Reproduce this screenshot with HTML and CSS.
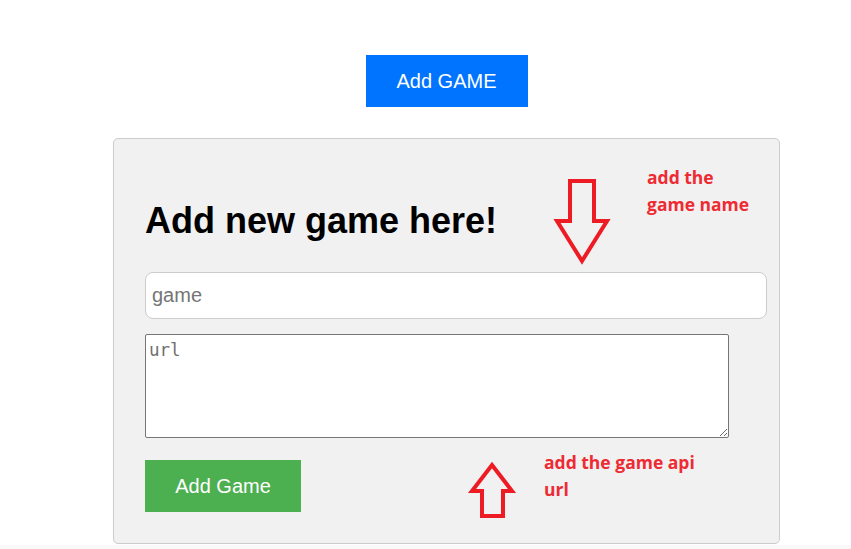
FILE: index.html
```html
<!DOCTYPE html>
<html>
<head>
<meta charset="utf-8">
<link rel="stylesheet" href="styles.css">
</head>
<body>
<div class="page">
  <div class="top">
    <button class="btn btn-blue">Add GAME</button>
  </div>
  <div class="card">
    <h1 class="title">Add new game here!</h1>
    <input class="field" type="text" placeholder="game">
    <textarea class="area" placeholder="url"></textarea>
    <button class="btn btn-green">Add Game</button>
  </div>
</div>
<div class="footer"></div>
<div class="notes">
  <svg class="arrows" width="851" height="549" viewBox="0 0 851 549">
    <path d="M570 181 H594 V221 H607 L582 261 L557 221 H570 Z" fill="none" stroke="#ed1c24" stroke-width="4" stroke-linejoin="miter"/>
    <path d="M492 465 L512 491 H503 V516 H482 V491 H472 Z" fill="none" stroke="#ed1c24" stroke-width="4" stroke-linejoin="miter"/>
  </svg>
  <div class="note note-name">add the<br>game name</div>
  <div class="note note-url">add the game api<br>url</div>
</div>
</body>
</html>
```
FILE: styles.css
```css
html, body {
  margin: 0;
  padding: 0;
  background: #ffffff;
}
body {
  font-family: "Liberation Sans", Arial, sans-serif;
  position: relative;
  width: 851px;
  height: 549px;
  overflow: hidden;
}
.page {
  width: 667px;
  margin-left: 113px;
  padding-top: 55px;
}
.top {
  display: flex;
  justify-content: center;
}
.btn {
  border: none;
  color: #ffffff;
  font-family: "Liberation Sans", Arial, sans-serif;
  font-size: 20px;
  height: 52px;
  padding: 0;
  cursor: pointer;
}
.btn-blue {
  background: #0074ff;
  width: 162px;
}
.btn-green {
  background: #4caf50;
  width: 156px;
  display: block;
}
.card {
  margin-top: 31px;
  background: #f1f1f1;
  border: 1px solid #cccccc;
  border-radius: 5px;
  padding: 32px 0 30px 31px;
  height: 342px;
}
.title {
  font-size: 36px;
  font-weight: bold;
  margin: 29px 0 31px 0;
  line-height: 41px;
  color: #000;
}
.field {
  display: block;
  box-sizing: border-box;
  width: 622px;
  height: 47px;
  border: 1px solid #cccccc;
  border-radius: 8px;
  padding: 0 6px;
  font-family: "Liberation Sans", Arial, sans-serif;
  font-size: 20px;
  margin: 0 0 15px 0;
  background: #fff;
}
.field::placeholder {
  color: #757575;
}
.area {
  display: block;
  box-sizing: border-box;
  width: 584px;
  height: 104px;
  border: 1px solid #767676;
  border-radius: 2px;
  padding: 5px 3px;
  font-family: "DejaVu Sans Mono", monospace;
  font-size: 17.5px;
  margin: 0 0 22px 0;
  background: #fff;
  resize: both;
}
.area::placeholder {
  color: #6f6f6f;
}
.footer {
  height: 10px;
  margin-top: 1px;
  background: #f9f9f9;
}
.notes {
  position: absolute;
  left: 0;
  top: 0;
  width: 851px;
  height: 549px;
  pointer-events: none;
}
.arrows {
  position: absolute;
  left: 0;
  top: 0;
}
.note {
  position: absolute;
  color: #ee2a33;
  font-family: "Open Sans", sans-serif;
  font-weight: bold;
  font-size: 17.5px;
  line-height: 27px;
}
.note-name {
  left: 647px;
  top: 164px;
}
.note-url {
  left: 544px;
  top: 449px;
}
```
